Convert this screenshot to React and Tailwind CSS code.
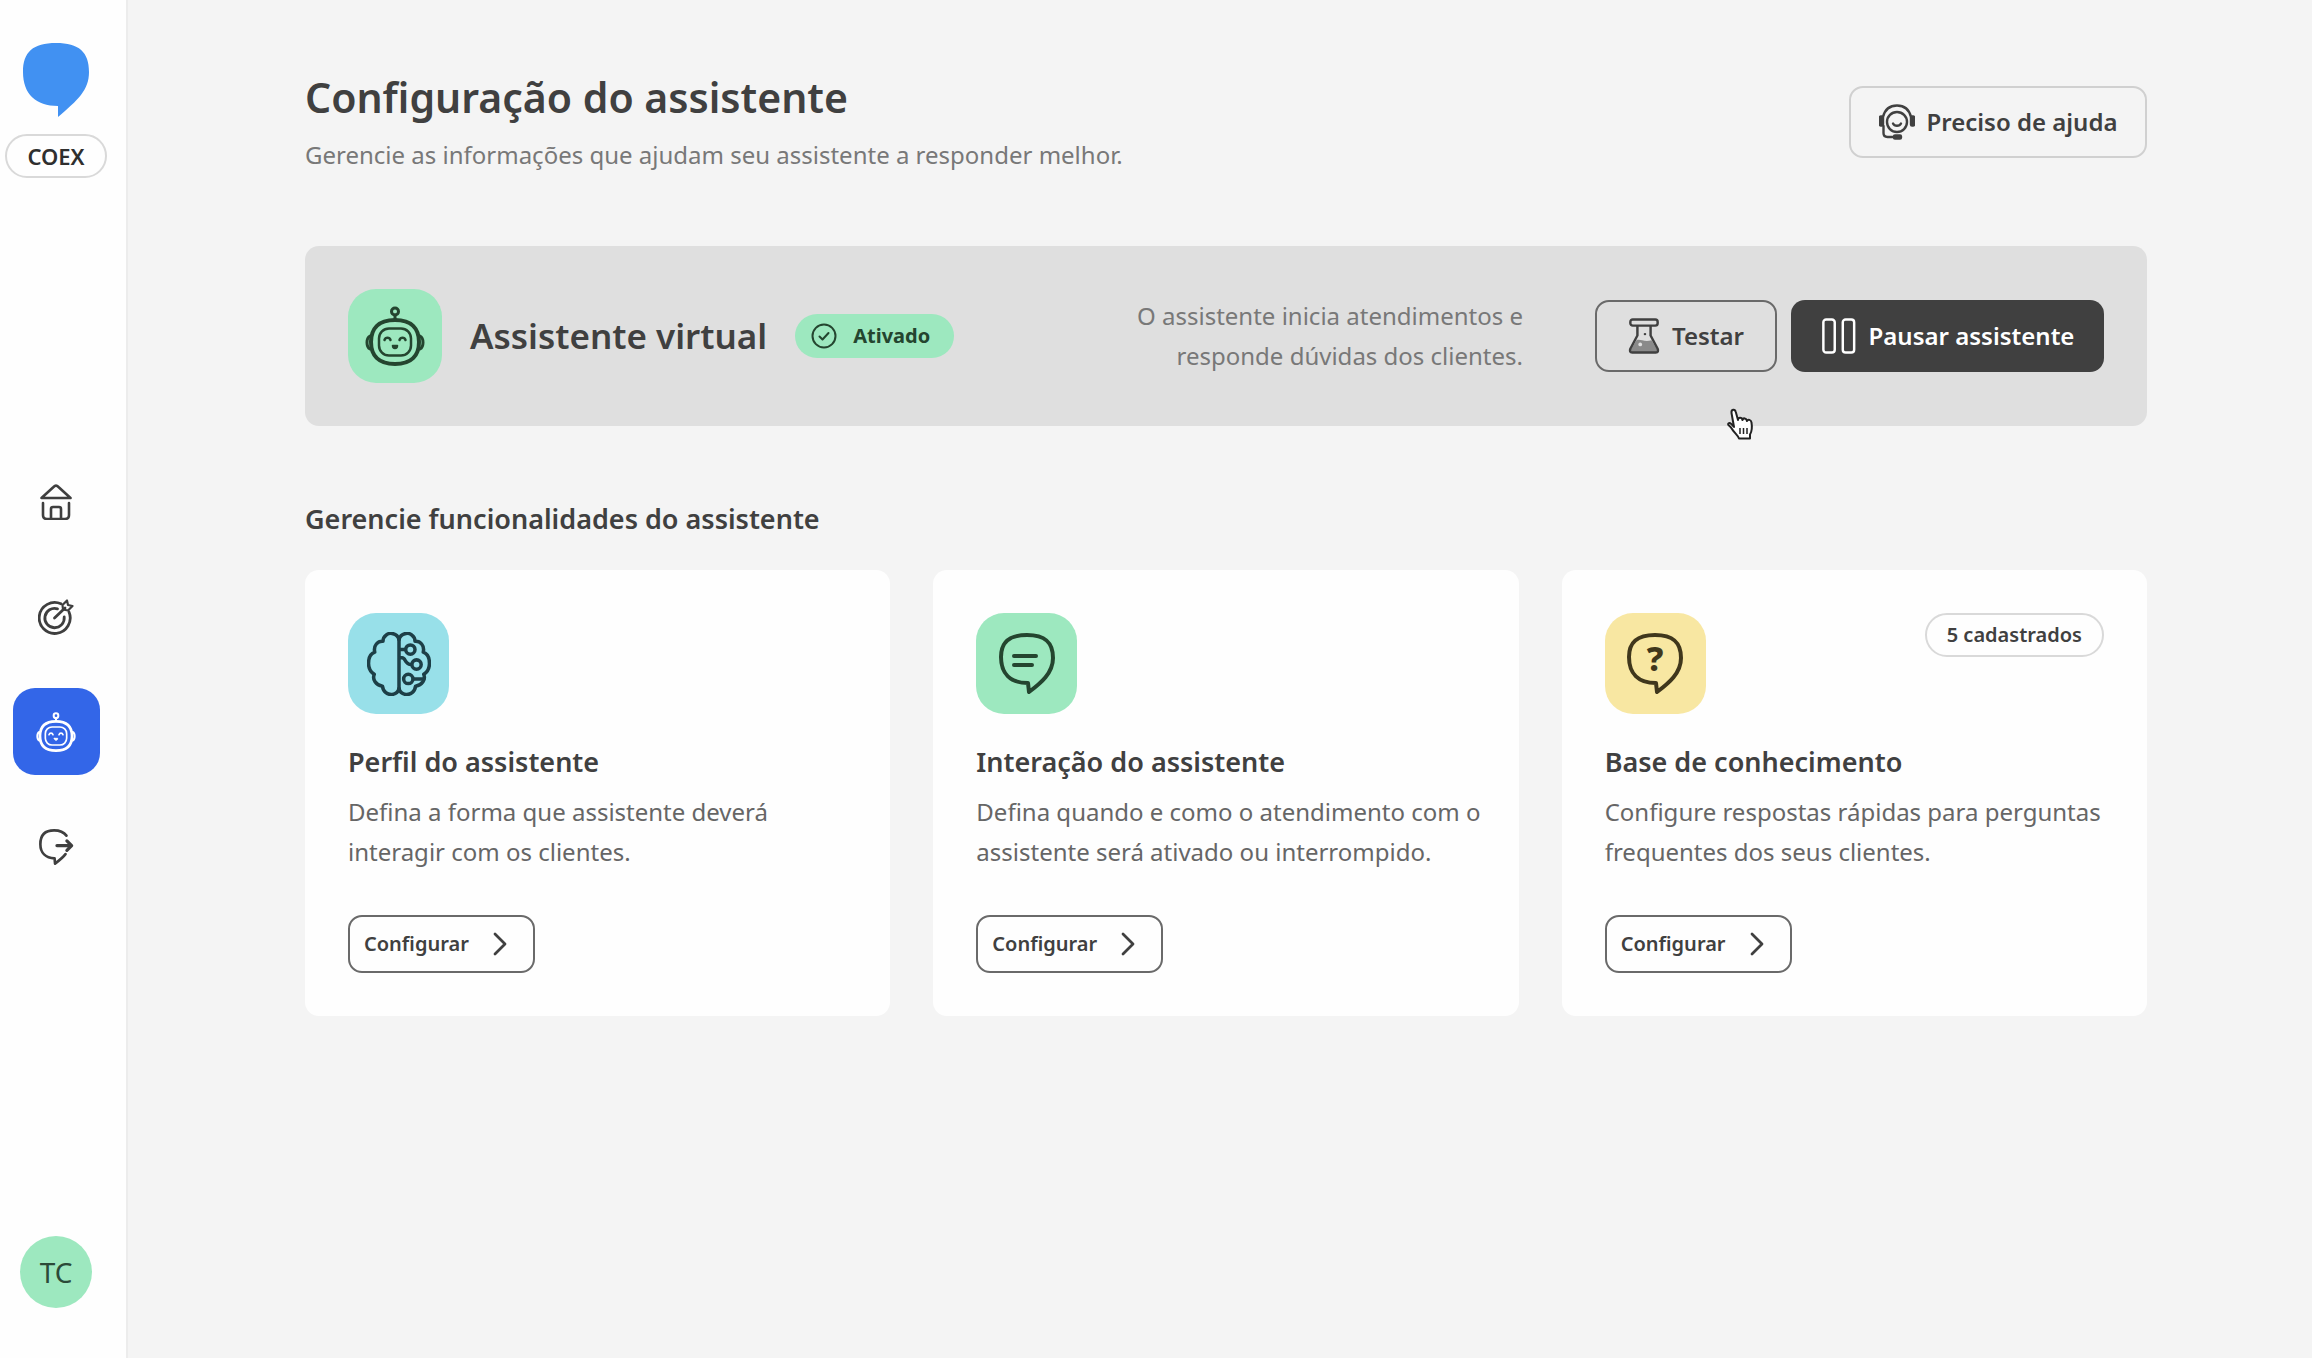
const BUBBLE = 'M29 50C11 50 2 40 2 24C2 9 10 2 28 2C46 2 54 9 54 25C54 40 42 50 30 59Z';
const HALF_BRAIN =
  'M31 7C29 1 22 0 18.5 3C16.5 4.5 15.5 6.5 15.5 9C10.5 8.5 6 13 7.5 19.5C3 21 1.5 25 1.5 30.5C1.5 35 3 38.5 7 41C5 46 8.5 51.5 15 52.5C15.5 58 20 61 24.5 60.5C28 60 30 58.5 31 55';

const stroke = {
  fill: 'none',
  stroke: 'currentColor',
  strokeLinecap: 'round',
  strokeLinejoin: 'round',
};

const RobotIcon = ({ className }) => (
  <svg viewBox="0 0 60 60" className={className} strokeWidth="3" {...stroke}>
    <circle cx="30" cy="5.5" r="3.5" />
    <path d="M30 9v5" />
    <path d="M30 14c17 0 24 9 24 22s-7 22-24 22S6 49 6 36s7-22 24-22z" strokeWidth="4" />
    <path d="M5 30c-4 2-4 11 0 13M55 30c4 2 4 11 0 13" />
    <rect x="14" y="22.5" width="32" height="27" rx="10" strokeWidth="2.5" />
    <path d="M19.5 34c1-3 5-3 6 0M34.5 34c1-3 5-3 6 0" strokeWidth="2.5" />
    <path d="M27.5 39.5h5c0 4-5 4-5 0z" fill="currentColor" strokeWidth="1.5" />
  </svg>
);

const HomeIcon = () => (
  <svg viewBox="0 0 32 36" className="h-9 w-8" strokeWidth="2.6" {...stroke}>
    <path d="M1.5 14 13.5 3q2.500-2.500 5 0L30.500 14z" />
    <path d="M3 19v12q0 4 4 4h18q4 0 4-4V19" />
    <path d="M11 35V25q0-2 2-2h6q2 0 2 2v10" />
  </svg>
);

const TargetIcon = () => (
  <svg viewBox="0 0 36 36" className="h-9 w-9" strokeWidth="2.8" {...stroke}>
    <path d="M23 4.8A15.5 15.5 0 1 0 31 13" />
    <path d="M19.5 9.8A9.7 9.7 0 1 0 26.200 18" />
    <path d="M16.5 19 27 9" />
    <path d="M25 10.5 24.5 6l4.500-4.500 1 4.500 4.500 1-4.500 4.500z" strokeWidth="2.2" />
  </svg>
);

const LeaveIcon = () => (
  <svg viewBox="0 0 36 38" className="h-9 w-9" strokeWidth="2.8" {...stroke}>
    <path d="M29 7C26 3 21 1.5 16 1.5C6 1.5 1.5 7 1.5 16C1.5 25 7 30.5 16.5 31L17 36.5C21 33.5 25 30.5 28 26.5" />
    <path d="M19 17.5h15M29.5 12.5l5 5-5 5" strokeWidth="3.4" />
  </svg>
);

const HeadsetIcon = () => (
  <svg viewBox="0 0 36 36" className="h-9 w-9 shrink-0" strokeWidth="2.4" {...stroke}>
    <path d="M4 13C6 5 11 1.5 18 1.5S30 5 32 13" />
    <rect x="1" y="12.5" width="3" height="9" rx="1" fill="currentColor" />
    <rect x="32" y="12.5" width="3" height="9" rx="1" fill="currentColor" />
    <circle cx="18" cy="18" r="10" />
    <path d="M14 19.5c1.5 3 6.5 3 8 0" />
    <path d="M4.5 22v7q0 4 4 4H15" />
    <rect x="15" y="31.5" width="7" height="3" rx="1" fill="currentColor" />
  </svg>
);

const FlaskIcon = () => (
  <svg viewBox="0 0 34 38" className="h-9 w-8 shrink-0" strokeWidth="2.6" {...stroke}>
    <path d="M9 23.5c4-2 8 2.500 16 0l6 10q1 3-2 3H5q-3 0-2-3z" fill="#8a8a8a" stroke="none" />
    <rect x="2.5" y="1.5" width="29" height="6.5" rx="2.5" />
    <path d="M10 8.5v10L2.5 32.5q-1.500 4 2 4h25q3.500 0 2-4L24 18.5v-10" />
    <circle cx="13" cy="28" r="2" fill="#e0e0e0" stroke="none" />
    <path d="M18 17h.1" />
  </svg>
);

const PauseIcon = () => (
  <svg viewBox="0 0 36 38" className="h-9 w-9 shrink-0" strokeWidth="2.6" {...stroke}>
    <rect x="1.5" y="1.5" width="12" height="35" rx="3" />
    <rect x="22" y="1.5" width="12" height="35" rx="3" />
  </svg>
);

const BrainIcon = () => (
  <svg viewBox="0 0 62 62" className="h-16 w-16" strokeWidth="3.4" {...stroke}>
    <path d={HALF_BRAIN} />
    <path d={HALF_BRAIN} transform="matrix(-1 0 0 1 62 0)" />
    <path d="M31 6v50M31 17h6M31 25h3c4 0 2 6.5 9 6.5M45 45.5h10" />
    <circle cx="42" cy="17" r="4.5" />
    <circle cx="48" cy="31.5" r="4.5" />
    <circle cx="40" cy="45.5" r="4.5" />
  </svg>
);

const ChatIcon = () => (
  <svg viewBox="0 0 56 62" className="h-16 w-14" strokeWidth="4" {...stroke}>
    <path d={BUBBLE} />
    <path d="M15 23h22M15 32h18" />
  </svg>
);

const QuestionIcon = () => (
  <svg viewBox="0 0 56 62" className="h-16 w-14" strokeWidth="4" {...stroke}>
    <path d={BUBBLE} />
    <text x="28" y="38" textAnchor="middle" fontSize="34" fontWeight="800" fill="currentColor" stroke="none">
      ?
    </text>
  </svg>
);

const HandCursor = () => (
  <svg
    viewBox="0 0 28 32"
    className="absolute top-[162px] right-[393px] h-8 w-7"
    fill="#fff"
    stroke="#222"
    strokeWidth="2"
    strokeLinejoin="round"
  >
    <path d="M8 19 5.5 5C5 1 9 .5 9.800 4L12 12c0-3 4-3 4.500 0c.5-2.500 4-2 4.500 1c1-2 4-1.500 4.500 1.500c.8 5 1 8-1.500 12v4H13c-1-3-5-6-7-9.500S1 17 2.500 15.500S6.500 17 8 19z" />
    <path d="M14 20v6M17.500 20v6M21 20v6" strokeWidth="1.500" />
  </svg>
);

const navItems = [
  { label: 'Início', Icon: HomeIcon },
  { label: 'Metas', Icon: TargetIcon },
  { label: 'Assistente', Icon: () => <RobotIcon className="h-10 w-10" />, active: true },
  { label: 'Sair', Icon: LeaveIcon },
];

const cards = [
  {
    title: 'Perfil do assistente',
    lines: ['Defina a forma que assistente deverá', 'interagir com os clientes.'],
    tile: 'bg-[#98e0e9] text-[#1d3f47]',
    Icon: BrainIcon,
  },
  {
    title: 'Interação do assistente',
    lines: ['Defina quando e como o atendimento com o', 'assistente será ativado ou interrompido.'],
    tile: 'bg-[#9de8bf] text-[#24452f]',
    Icon: ChatIcon,
  },
  {
    title: 'Base de conhecimento',
    lines: ['Configure respostas rápidas para perguntas', 'frequentes dos seus clientes.'],
    tile: 'bg-[#f8e7a2] text-[#40371c]',
    Icon: QuestionIcon,
    badge: '5 cadastrados',
  },
];

const Sidebar = () => (
  <aside className="flex w-32 shrink-0 flex-col items-center border-r-2 border-[#ececec] bg-[#fefefe] pt-[43px] pr-[14px] pb-[50px]">
    <svg viewBox="0 0 66 74" className="h-[74px] w-[66px]" fill="#4191f2">
      <path d="M35 63C13 63 0 51 0 29C0 9 10 0 33 0C56 0 66 9 66 29C66 47 55 57 35 74Z" />
    </svg>
    <span className="mt-[17px] flex h-11 w-[102px] items-center justify-center rounded-full border-2 border-[#d9d9d9] text-[22px] font-semibold text-[#2f2f2f]">
      COEX
    </span>
    <nav className="mt-[280px] flex flex-col gap-7">
      {navItems.map(({ label, Icon, active }) => (
        <a
          key={label}
          href="#"
          aria-label={label}
          className={
            'flex h-[87px] w-[87px] items-center justify-center rounded-[22px] ' +
            (active ? 'bg-[#3366e8] text-white' : 'text-[#3f3f3f]')
          }
        >
          <Icon />
        </a>
      ))}
    </nav>
    <button className="mt-auto h-[72px] w-[72px] rounded-full bg-[#9de8bf] text-[28px] leading-10 text-[#2c4a38]">
      TC
    </button>
  </aside>
);

const Banner = () => (
  <section className="relative mt-[71px] flex items-center rounded-[14px] bg-[#dfdfdf] p-[43px]">
    <div className="flex h-[94px] w-[94px] items-center justify-center rounded-[28px] bg-[#9de8bf] text-[#24452f]">
      <RobotIcon className="h-[60px] w-[60px]" />
    </div>
    <h2 className="ml-7 text-[35px] leading-14 font-semibold">Assistente virtual</h2>
    <span className="ml-7 flex h-11 items-center gap-4 rounded-full bg-[#9de8bf] pr-6 pl-4 text-[20px] font-bold text-[#24452f]">
      <svg viewBox="0 0 26 26" className="h-[26px] w-[26px]" strokeWidth="2" {...stroke}>
        <circle cx="13" cy="13" r="11.5" />
        <path d="M8.5 13.5l3 3 6-6.500" />
      </svg>
      Ativado
    </span>
    <p className="ml-auto text-right text-[24px] leading-10 text-[#787878]">
      O assistente inicia atendimentos e
      <br />
      responde dúvidas dos clientes.
    </p>
    <button className="ml-[72px] flex h-[72px] w-[182px] items-center justify-center gap-3 rounded-[14px] border-2 border-[#6a6a6a] text-[24px] font-semibold">
      <FlaskIcon />
      Testar
    </button>
    <button className="ml-[14px] flex h-[72px] w-[313px] items-center justify-center gap-3 rounded-[14px] bg-[#404040] text-[24px] font-semibold text-white">
      <PauseIcon />
      Pausar assistente
    </button>
    <HandCursor />
  </section>
);

const FeatureCard = ({ title, lines, tile, Icon, badge }) => (
  <article className="flex flex-col items-start rounded-[14px] bg-[#fefefe] px-[43px] pt-[43px] pb-[43px]">
    <div className="flex w-full items-start justify-between">
      <div className={'flex h-[101px] w-[101px] items-center justify-center rounded-[28px] ' + tile}>
        <Icon />
      </div>
      {badge && (
        <span className="flex h-11 items-center rounded-full border-2 border-[#d9d9d9] px-5 text-[20px] font-semibold">
          {badge}
        </span>
      )}
    </div>
    <h3 className="mt-7 text-[27px] leading-10 font-semibold">{title}</h3>
    <p className="mt-[10px] text-[24px] leading-10 whitespace-nowrap text-[#666666]">
      {lines[0]}
      <br />
      {lines[1]}
    </p>
    <button className="mt-[43px] flex h-[58px] w-[187px] items-center gap-6 rounded-[14px] border-2 border-[#6a6a6a] pl-[14px] text-[20px] font-semibold">
      Configurar
      <svg viewBox="0 0 14 24" className="h-6 w-[14px]" strokeWidth="2.8" {...stroke}>
        <path d="M2 2l10 10L2 22" />
      </svg>
    </button>
  </article>
);

export default function App() {
  return (
    <div className="flex min-h-screen bg-[#f4f4f4] font-['Noto_Sans',sans-serif] text-[#404040]">
      <Sidebar />
      <main className="flex-1 pt-[69px] pr-[165px] pl-[177px]">
        <header className="flex items-center justify-between">
          <div>
            <h1 className="text-[41px] leading-14 font-semibold">Configuração do assistente</h1>
            <p className="mt-[10px] text-[24px] leading-10 text-[#787878]">
              Gerencie as informações que ajudam seu assistente a responder melhor.
            </p>
          </div>
          <button className="flex h-[72px] w-[298px] items-center justify-center gap-3 rounded-[14px] border-2 border-[#d0d0d0] text-[24px] font-semibold">
            <HeadsetIcon />
            Preciso de ajuda
          </button>
        </header>
        <Banner />
        <h2 className="mt-[73px] text-[27px] leading-10 font-semibold">Gerencie funcionalidades do assistente</h2>
        <div className="mt-[31px] grid grid-cols-3 gap-[43px]">
          {cards.map((card) => (
            <FeatureCard key={card.title} {...card} />
          ))}
        </div>
      </main>
    </div>
  );
}
